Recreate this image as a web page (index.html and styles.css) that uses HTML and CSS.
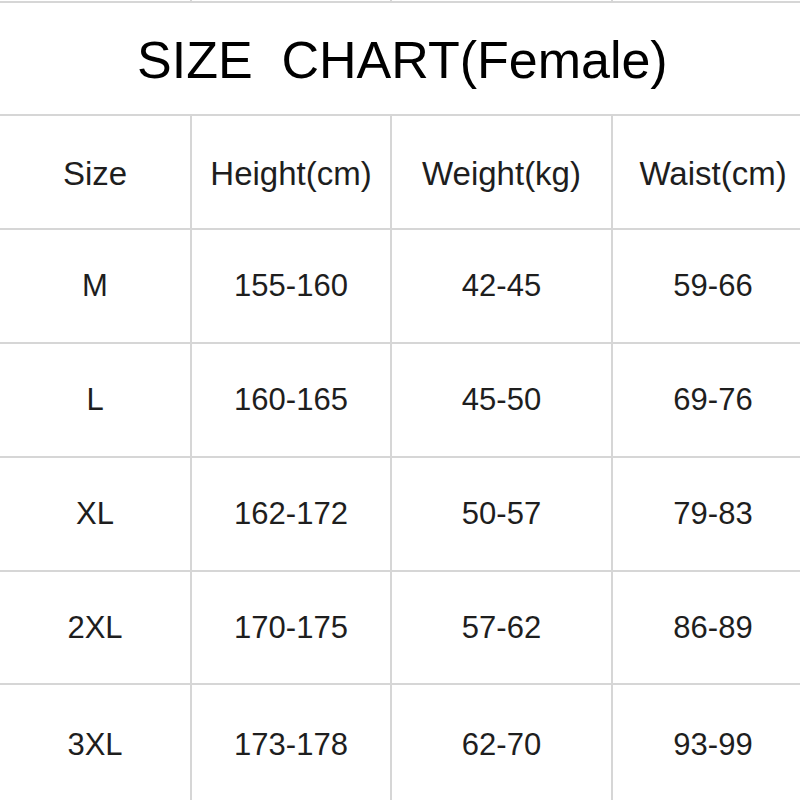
FILE: index.html
```html
<!DOCTYPE html>
<html>
<head>
<meta charset="utf-8">
<link rel="stylesheet" href="styles.css">
</head>
<body>
<div class="chart">
  <div class="cell strip"></div><div class="cell strip"></div><div class="cell strip"></div><div class="cell strip"></div>
  <div class="cell title">SIZE&nbsp;&nbsp;CHART(Female)</div>
  <div class="cell head">Size</div><div class="cell head">Height(cm)</div><div class="cell head">Weight(kg)</div><div class="cell head">Waist(cm)</div>
  <div class="cell">M</div><div class="cell">155-160</div><div class="cell">42-45</div><div class="cell">59-66</div>
  <div class="cell">L</div><div class="cell">160-165</div><div class="cell">45-50</div><div class="cell">69-76</div>
  <div class="cell">XL</div><div class="cell">162-172</div><div class="cell">50-57</div><div class="cell">79-83</div>
  <div class="cell">2XL</div><div class="cell">170-175</div><div class="cell">57-62</div><div class="cell">86-89</div>
  <div class="cell">3XL</div><div class="cell">173-178</div><div class="cell">62-70</div><div class="cell">93-99</div>
</div>
</body>
</html>
```
FILE: styles.css
```css
html, body {
  margin: 0;
  padding: 0;
  background: #fff;
  overflow: hidden;
  width: 800px;
  height: 800px;
}
.chart {
  display: grid;
  width: 813px;
  grid-template-columns: 190px 198px 219px 200px;
  grid-template-rows: 1px 111px 112px 112px 112px 112px 111px 120px;
  gap: 2px;
  background: #d6d6d6;
  font-family: "Liberation Sans", Arial, sans-serif;
  color: #1e1e1e;
}
.cell {
  background: #fff;
  display: flex;
  align-items: center;
  justify-content: center;
  font-size: 31px;
  white-space: nowrap;
}
.cell.head {
  font-size: 33px;
  padding-top: 3px;
}
.cell.title {
  grid-column: 1 / -1;
  justify-content: flex-start;
  padding-left: 137px;
  font-size: 52px;
  color: #000;
  padding-top: 2px;
}
```
